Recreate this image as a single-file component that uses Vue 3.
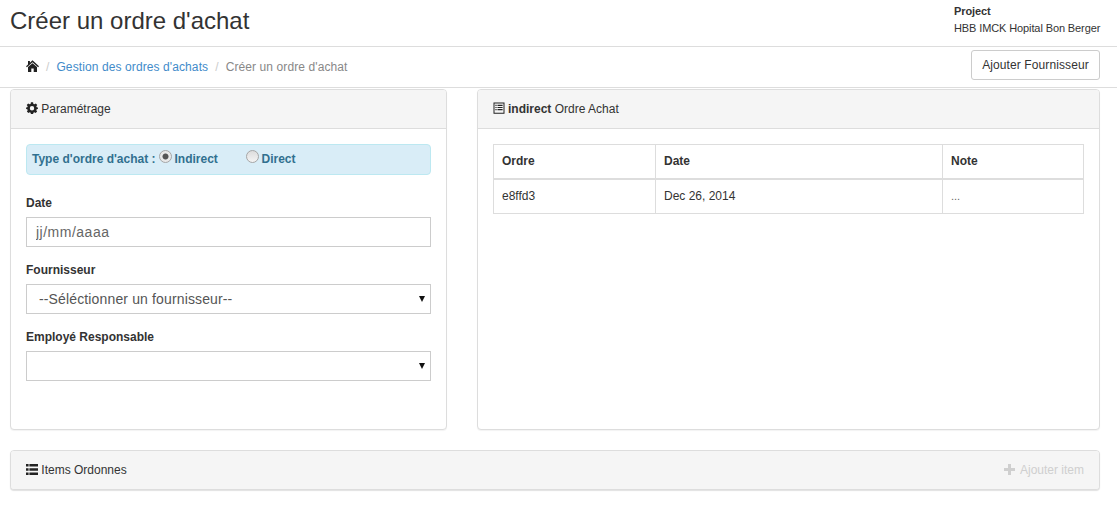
<script setup>
const orders = [{ id: 'e8ffd3', date: 'Dec 26, 2014', note: '...' }];
</script>

<template>
  <div class="page">
    <header class="top">
      <h1>Créer un ordre d'achat</h1>
      <div class="project">
        <strong>Project</strong>
        <span>HBB IMCK Hopital Bon Berger</span>
      </div>
    </header>

    <nav class="crumbs">
      <ol>
        <li>
          <svg class="home" viewBox="0 0 13 12" width="13" height="12">
            <path d="M6.5 0.3 L13 6.2 L12.1 7.2 L6.5 2.2 L0.9 7.2 L0 6.2 L2 4.4 L2 1 L3.9 1 L3.9 2.7 Z" fill="#222" />
            <path d="M2 7.1 L6.5 3.2 L11 7.1 L11 12 L7.7 12 L7.7 8.5 L5.3 8.5 L5.3 12 L2 12 Z" fill="#222" />
          </svg>
        </li>
        <li class="sep">/</li>
        <li><a href="#">Gestion des ordres d'achats</a></li>
        <li class="sep">/</li>
        <li class="current">Créer un ordre d'achat</li>
      </ol>
      <button class="btn" type="button">Ajouter Fournisseur</button>
    </nav>

    <main class="content">
      <div class="columns">
        <section class="panel left">
          <div class="panel-heading">
            <svg class="ico" viewBox="0 0 12 12" width="12" height="12">
              <path fill-rule="evenodd" fill="#222" d="M4.9 0.3 L7.1 0.3 L7.4 1.9 L8.4 2.3 L9.8 1.4 L11.3 2.9 L10.3 4.3 L10.7 5.2 L11.9 5.5 L11.9 7 L10.7 7.3 L10.3 8.3 L11.1 9.6 L9.6 11.1 L8.3 10.3 L7.4 10.7 L7.1 11.9 L4.9 11.9 L4.6 10.7 L3.7 10.3 L2.4 11.1 L0.9 9.6 L1.7 8.3 L1.3 7.3 L0.1 7 L0.1 5.5 L1.3 5.2 L1.7 4.3 L0.7 2.9 L2.2 1.4 L3.6 2.3 L4.6 1.9 Z M6 4 A2.2 2.2 0 1 0 6 8.4 A2.2 2.2 0 1 0 6 4 Z" />
            </svg>
            Paramétrage
          </div>
          <div class="panel-body">
            <div class="alert">
              <span class="alert-label">Type d'ordre d'achat :</span>
              <label class="radio first"><input type="radio" name="kind" checked />Indirect</label>
              <label class="radio"><input type="radio" name="kind" />Direct</label>
            </div>
            <div class="field">
              <label>Date</label>
              <input class="control date" type="text" placeholder="jj/mm/aaaa" />
            </div>
            <div class="field">
              <label>Fournisseur</label>
              <div class="select">
                <select class="control">
                  <option>--Séléctionner un fournisseur--</option>
                </select>
              </div>
            </div>
            <div class="field">
              <label>Employé Responsable</label>
              <div class="select">
                <select class="control"></select>
              </div>
            </div>
          </div>
        </section>

        <section class="panel right">
          <div class="panel-heading">
            <svg class="ico ico-gap" viewBox="0 0 12 12" width="12" height="12">
              <path fill-rule="evenodd" fill="#222" d="M0.5 0.5 H11.5 V11.8 H0.5 Z M1.5 1.5 V10.8 H10.5 V1.5 Z" />
              <path fill="#222" d="M2.4 2.7 H3.6 V3.9 H2.4 Z M4.5 2.7 H9.6 V3.9 H4.5 Z M2.4 4.9 H3.6 V6.1 H2.4 Z M4.5 4.9 H9.6 V6.1 H4.5 Z M2.4 7 H3.6 V8.2 H2.4 Z M4.5 7 H9.6 V8.2 H4.5 Z" />
            </svg>
            <strong>indirect</strong> Ordre Achat
          </div>
          <div class="panel-body">
            <table>
              <thead>
                <tr>
                  <th class="c1">Ordre</th>
                  <th class="c2">Date</th>
                  <th>Note</th>
                </tr>
              </thead>
              <tbody>
                <tr v-for="o in orders" :key="o.id">
                  <td>{{ o.id }}</td>
                  <td>{{ o.date }}</td>
                  <td class="note">{{ o.note }}</td>
                </tr>
              </tbody>
            </table>
          </div>
        </section>
      </div>

      <section class="panel items">
        <div class="panel-heading items-heading">
          <span>
            <svg class="ico" viewBox="0 0 12 11" width="12" height="11">
              <path fill="#222" d="M0 0 H2.6 V2.6 H0 Z M3.4 0 H12 V2.6 H3.4 Z M0 4.2 H2.6 V6.8 H0 Z M3.4 4.2 H12 V6.8 H3.4 Z M0 8.4 H2.6 V11 H0 Z M3.4 8.4 H12 V11 H3.4 Z" />
            </svg>
            Items Ordonnes
          </span>
          <span class="add-item">
            <svg viewBox="0 0 11 11" width="11" height="11">
              <path fill="#cfcfcf" d="M4 0 H7 V4 H11 V7 H7 V11 H4 V7 H0 V4 H4 Z" />
            </svg>
            Ajouter item
          </span>
        </div>
      </section>
    </main>
  </div>
</template>

<style>
html, body {
  margin: 0;
  background: #fff;
}
</style>

<style scoped>
.page {
  font-family: "Liberation Sans", Arial, sans-serif;
  font-size: 12px;
  line-height: 17px;
  color: #333;
  width: 1117px;
  height: 509px;
  overflow: hidden;
}

.top {
  display: flex;
  justify-content: space-between;
  height: 46px;
  padding: 0 17px 0 10px;
  border-bottom: 1px solid #ddd;
}

.top h1 {
  margin: 6px 0 0;
  font-size: 24px;
  font-weight: 400;
  line-height: 30px;
  color: #333;
}

.project {
  display: flex;
  flex-direction: column;
  width: 146px;
  padding-top: 3px;
  font-size: 11px;
  line-height: 17px;
  letter-spacing: -0.11px;
  white-space: nowrap;
}

.crumbs {
  display: flex;
  justify-content: space-between;
  align-items: center;
  height: 40px;
  padding: 0 17px 0 26px;
  border-bottom: 1px solid #ddd;
  letter-spacing: 0.1px;
}

.crumbs ol {
  display: flex;
  align-items: center;
  margin: 0;
  padding: 0;
  list-style: none;
}

.home {
  display: block;
  margin-top: -2px;
}

.sep {
  margin: 0 7px;
  color: #ccc;
}

.crumbs a {
  color: #428bca;
  text-decoration: none;
}

.current {
  color: #888;
}

.btn {
  align-self: flex-start;
  height: 30px;
  width: 129px;
  padding: 0;
  margin-top: 3px;
  background: #fff;
  border: 1px solid #ccc;
  border-radius: 3px;
  font: inherit;
  letter-spacing: 0.1px;
  color: #333;
}

.content {
  padding: 1px 17px 0 10px;
}

.columns {
  display: flex;
  gap: 30px;
  margin-bottom: 20px;
}

.panel {
  box-sizing: border-box;
  background: #fff;
  border: 1px solid #ddd;
  border-radius: 4px;
  box-shadow: 0 1px 1px rgba(0, 0, 0, 0.05);
}

.left {
  width: 437px;
  height: 341px;
}

.right {
  width: 623px;
  height: 341px;
}

.panel-heading {
  box-sizing: border-box;
  height: 39px;
  padding: 11px 15px 0;
  background: #f5f5f5;
  border-bottom: 1px solid #ddd;
  border-radius: 3px 3px 0 0;
  color: #333;
}

.ico {
  vertical-align: -1px;
}

.ico-gap {
  margin-right: 3px;
}

.panel-body {
  padding: 15px;
}

.alert {
  box-sizing: border-box;
  height: 31px;
  display: flex;
  align-items: center;
  padding: 0 5px;
  margin-bottom: 20px;
  background: #d9edf7;
  border: 1px solid #bce8f1;
  border-radius: 4px;
  color: #31708f;
  font-weight: 700;
}

.radio {
  display: flex;
  align-items: center;
  width: 87px;
}

.radio.first {
  margin-left: 3px;
}

.radio input {
  appearance: none;
  box-sizing: border-box;
  width: 13px;
  height: 13px;
  margin: -6px 3px 0 0;
  border: 1px solid #a6a6a6;
  border-radius: 50%;
  background: linear-gradient(#dcdcdc, #f4f4f4);
}

.radio input:checked {
  background: radial-gradient(circle, #555 0, #555 2.6px, #e8e8e8 3.4px);
}

.field {
  margin-bottom: 15px;
}

.field label {
  display: block;
  margin-bottom: 5px;
  font-weight: 700;
  color: #333;
}

.control {
  display: block;
  box-sizing: border-box;
  width: 100%;
  height: 30px;
  padding: 0 9px;
  background: #fff;
  border: 1px solid #ccc;
  border-radius: 0;
  outline: none;
  font: 14px "Liberation Sans", Arial, sans-serif;
  letter-spacing: 0.14px;
  color: #555;
}

.control.date {
  letter-spacing: 0.5px;
}

.control::placeholder {
  color: #666;
  opacity: 1;
}

.select {
  position: relative;
}

.select select {
  appearance: none;
  padding-left: 12px;
}

.select::after {
  content: "";
  position: absolute;
  right: 6px;
  top: 12px;
  border-left: 3px solid transparent;
  border-right: 3px solid transparent;
  border-top: 6px solid #111;
}

table {
  width: 591px;
  border-collapse: collapse;
  table-layout: fixed;
}

th, td {
  box-sizing: border-box;
  height: 35px;
  padding: 0 8px;
  border: 1px solid #ddd;
  text-align: left;
}

th {
  height: 34px;
  border-bottom-width: 2px;
}

.note {
  font-size: 11px;
  color: #666;
}

.c1 {
  width: 162px;
}

.c2 {
  width: 287px;
}

.items {
  height: 40px;
  box-shadow: 0 1px 1px rgba(0, 0, 0, 0.12);
}

.items-heading {
  display: flex;
  justify-content: space-between;
  height: 38px;
  border-bottom: 0;
  border-radius: 3px;
}

.add-item {
  color: #cfcfcf;
}

.add-item svg {
  vertical-align: -1px;
  margin-right: 2px;
}
</style>
